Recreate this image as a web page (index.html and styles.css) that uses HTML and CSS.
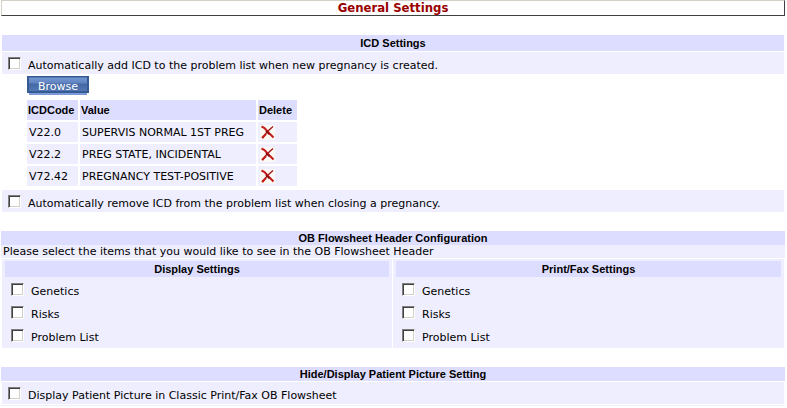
FILE: index.html
```html
<!DOCTYPE html>
<html lang="en">
<head>
<meta charset="utf-8">
<title>General Settings</title>
<link rel="stylesheet" href="styles.css">
</head>
<body>
<svg class="symbols" aria-hidden="true">
  <symbol id="delete-icon" viewBox="0 0 15 15">
    <rect width="15" height="15" fill="#fbf8f4"/>
    <path d="M13 1.500C9 4.500 5 9 2.500 13" fill="none" stroke="#a01818" stroke-width="1.500"/>
    <path d="M1.500 1.500l3 1.500 5 5.500 4 4" fill="none" stroke="#c41c1c" stroke-width="2"/>
    <path d="M6 9l-4 4" fill="none" stroke="#c41c1c" stroke-width="2.200"/>
    <path d="M6 6l3.500 3.500" fill="none" stroke="#7c0808" stroke-width="1.500"/>
  </symbol>
</svg>
<main class="page">
  <h1 class="title">General Settings</h1>

  <section class="section icd">
    <h2 class="heading">ICD Settings</h2>
    <label class="option"><input type="checkbox" class="box">Automatically add ICD to the problem list when new pregnancy is created.</label>
    <div class="codes">
      <button type="button" class="browse">Browse</button>
      <table class="code-table">
        <thead>
          <tr><th class="code">ICDCode</th><th class="value">Value</th><th class="action">Delete</th></tr>
        </thead>
        <tbody>
          <tr><td>V22.0</td><td>SUPERVIS NORMAL 1ST PREG</td><td><button type="button" class="delete" aria-label="Delete V22.0"><svg class="icon"><use href="#delete-icon"/></svg></button></td></tr>
          <tr><td>V22.2</td><td>PREG STATE, INCIDENTAL</td><td><button type="button" class="delete" aria-label="Delete V22.2"><svg class="icon"><use href="#delete-icon"/></svg></button></td></tr>
          <tr><td>V72.42</td><td>PREGNANCY TEST-POSITIVE</td><td><button type="button" class="delete" aria-label="Delete V72.42"><svg class="icon"><use href="#delete-icon"/></svg></button></td></tr>
        </tbody>
      </table>
    </div>
    <label class="option"><input type="checkbox" class="box">Automatically remove ICD from the problem list when closing a pregnancy.</label>
  </section>

  <section class="section">
    <h2 class="heading compact">OB Flowsheet Header Configuration</h2>
    <p class="intro">Please select the items that you would like to see in the OB Flowsheet Header</p>
    <div class="panels">
      <div class="panel">
        <h3 class="heading">Display Settings</h3>
        <label class="option"><input type="checkbox" class="box">Genetics</label>
        <label class="option"><input type="checkbox" class="box">Risks</label>
        <label class="option"><input type="checkbox" class="box">Problem List</label>
      </div>
      <div class="panel">
        <h3 class="heading">Print/Fax Settings</h3>
        <label class="option"><input type="checkbox" class="box">Genetics</label>
        <label class="option"><input type="checkbox" class="box">Risks</label>
        <label class="option"><input type="checkbox" class="box">Problem List</label>
      </div>
    </div>
  </section>

  <section class="section">
    <h2 class="heading compact">Hide/Display Patient Picture Setting</h2>
    <div class="inset">
      <label class="option"><input type="checkbox" class="box">Display Patient Picture in Classic Print/Fax OB Flowsheet</label>
    </div>
    <div class="rule"></div>
  </section>
</main>
</body>
</html>
```
FILE: styles.css
```css
* {
  box-sizing: border-box;
}

body {
  margin: 0;
  background: #fff;
  color: #000;
  font: 11px/13px Verdana, "DejaVu Sans", sans-serif;
}

.symbols {
  display: none;
}

.page {
  margin: 0 2px 0 1px;
}

.title {
  margin: 0;
  border: 1px solid;
  border-color: #d4d0c8 #404040 #404040 #d4d0c8;
  color: #900;
  font: bold 13px/14px Tahoma, "DejaVu Sans Condensed", sans-serif;
  text-align: center;
}

.section {
  margin-top: 19px;
}

.icd {
  margin: 19px 1px 0;
}

.heading {
  margin: 0;
  background: #ddf;
  font: bold 11px/16px Arial, "Liberation Sans", sans-serif;
  text-align: center;
}

.compact {
  line-height: 14px;
}

.option {
  display: flex;
  align-items: center;
  gap: 7px;
  height: 22px;
  padding: 4px 6px 0;
  background: #eef;
}

.icd > .option:nth-child(2) {
  margin-top: 1px;
}

.box {
  appearance: none;
  flex: none;
  width: 13px;
  height: 13px;
  margin: 0 0 4px;
  border: 1px solid;
  border-color: #808080 #fff #fff #808080;
  background: #fff;
  box-shadow: inset 1px 1px #404040, inset -1px -1px #d4d0c8;
}

.codes {
  padding: 2px 0 2px 23px;
}

.browse {
  display: block;
  width: 62px;
  height: 19px;
  margin: 0 0 3px 2px;
  padding: 1px 0 0;
  border: 0;
  background:
    linear-gradient(90deg, #355a94 2px, transparent 2px, transparent 60px, #355a94 60px) 0 0 / 100% 16px no-repeat,
    linear-gradient(#355a94 1px, #7295d2 2px, #6183c0 7px, #4468a4 8px, #5377b4 15px, #355a94 15px) 0 0 / 100% 17px no-repeat,
    linear-gradient(#7b9bd8, #7b9bd8) 2px 100% / 58px 3px no-repeat;
  color: #fff;
  font: 11px/17px Verdana, "DejaVu Sans", sans-serif;
}

.code-table {
  border-collapse: separate;
  border-spacing: 2px;
}

.code-table th,
.code-table td {
  height: 20px;
  padding: 0 2px;
  background: #eef;
  text-align: left;
  white-space: nowrap;
}

.code-table th {
  padding: 0 2px 0 1px;
  background: #ddf;
  font: bold 11px/13px Arial, "Liberation Sans", sans-serif;
}

.code-table .code {
  width: 51px;
}

.code-table .value {
  width: 176px;
}

.code-table .action {
  width: 39px;
}

.delete {
  display: block;
  padding: 0;
  border: 0;
  background: none;
}

.icon {
  display: block;
  width: 15px;
  height: 15px;
}

.intro {
  margin: 0;
  padding: 0 2px;
  background: #eef;
}

.panels {
  display: grid;
  grid-template-columns: 390fr 391fr;
  gap: 1px;
  margin: 1px 1px 0;
}

.panel {
  padding: 2px 3px 1px;
  background: #eef;
}

.panel .option {
  height: 23px;
}

.panel .heading {
  margin-bottom: 1px;
}

.inset {
  margin: 1px 1px;
}

.rule {
  height: 1px;
  background: #eef;
}
```
